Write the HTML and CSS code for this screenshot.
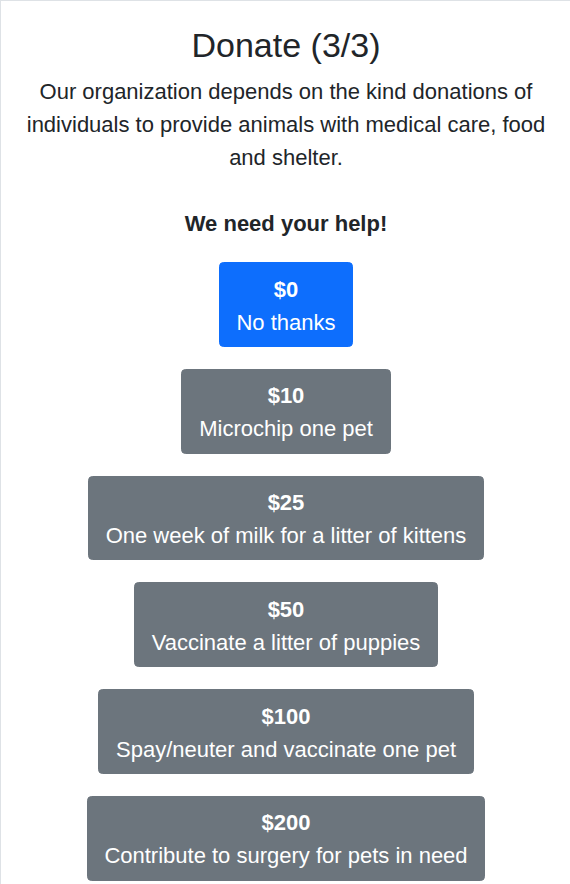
FILE: index.html
```html
<!DOCTYPE html>
<html>
<head>
<meta charset="utf-8">
<link rel="stylesheet" href="styles.css">
</head>
<body>
<div class="page">
  <h2 class="title">Donate (3/3)</h2>
  <p class="lead">Our organization depends on the kind donations of individuals to provide animals with medical care, food and shelter.<br><br><strong>We need your help!</strong></p>
  <div class="options">
    <button class="btn btn-primary"><strong>$0</strong><br>No thanks</button>
    <button class="btn btn-secondary"><strong>$10</strong><br>Microchip one pet</button>
    <button class="btn btn-secondary"><strong>$25</strong><br>One week of milk for a litter of kittens</button>
    <button class="btn btn-secondary"><strong>$50</strong><br>Vaccinate a litter of puppies</button>
    <button class="btn btn-secondary"><strong>$100</strong><br>Spay/neuter and vaccinate one pet</button>
    <button class="btn btn-secondary"><strong>$200</strong><br>Contribute to surgery for pets in need</button>
  </div>
</div>
</body>
</html>
```
FILE: styles.css
```css
html, body {
  margin: 0;
  padding: 0;
  overflow: hidden;
  background: #fff;
}
body {
  font-family: "Liberation Sans", Arial, sans-serif;
  color: #212529;
}
.page {
  box-sizing: border-box;
  width: 571px;
  height: 884px;
  border-top: 1px solid #dee2e6;
  border-left: 1px solid #dee2e6;
  padding: 23.7px 12px 0;
  text-align: center;
}
.title {
  margin: 0 0 9.5px;
  font-size: 34px;
  line-height: 40.8px;
  font-weight: 400;
}
.lead {
  margin: 0 0 22px;
  font-size: 22px;
  line-height: 33px;
}
.options {
  display: flex;
  flex-direction: column;
  align-items: center;
  gap: 22px;
}
.btn {
  font-family: inherit;
  font-size: 22px;
  line-height: 33px;
  padding: 9.6px 16.8px 7.2px;
  border: 1px solid transparent;
  border-radius: 4.5px;
  color: #fff;
  cursor: pointer;
}
.btn-primary {
  background: #0d6efd;
  border-color: #0d6efd;
}
.btn-secondary {
  background: #6c757d;
  border-color: #6c757d;
}
```
